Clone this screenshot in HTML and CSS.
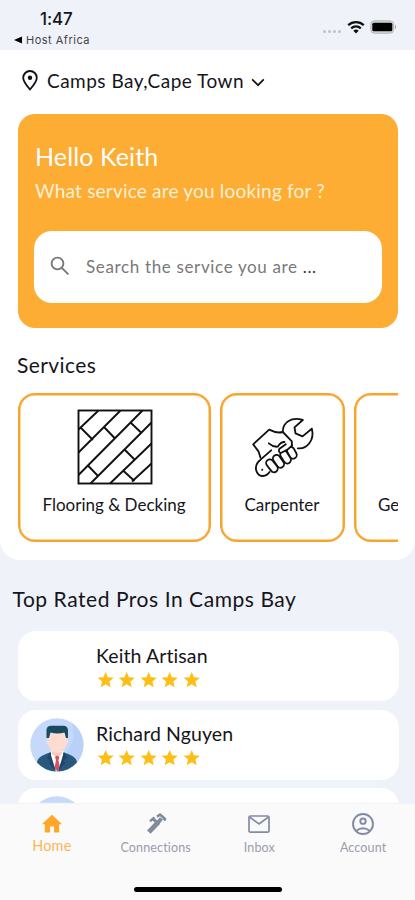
FILE: index.html
```html
<!DOCTYPE html>
<html lang="en">
<head>
<meta charset="utf-8">
<meta name="viewport" content="width=device-width, initial-scale=1">
<title>Home</title>
<link rel="stylesheet" href="styles.css">
</head>
<body>
<svg class="defs" width="0" height="0" aria-hidden="true">
  <symbol id="star" viewBox="0 0 24 24"><path d="M12 17.3 18.2 21l-1.6-7L22 9.200l-7.200-.6L12 2 9.200 8.600 2 9.200 7.500 14l-1.700 7z"/></symbol>
  <symbol id="avatar" viewBox="0 0 54 54">
    <circle cx="27" cy="27" r="26.700" fill="#c5dafa"/>
    <path d="M42 5a26.700 26.700 0 0 1 2 42L36 36 44 20z" fill="#b9d1f7"/>
    <path d="M7 44.500c1-5.500 5-7 13-10h14c8 3 12 4.500 13 10a26.700 26.700 0 0 1-40 0z" fill="#29587f"/>
    <path d="M21 33h12.500l-1 8-4 12.500h-3L21 41z" fill="#fff"/>
    <path d="M22 27h10v9l-5 4-5-4z" fill="#f8c9be"/>
    <path d="M18 15h19v6c1.500 0 1.500 5-.5 5.500C35 32 31 35 27.500 35S19.500 32 18.200 26.500C16 26 16 21 18 21z" fill="#fddcd2"/>
    <path d="M16.500 20V11.500Q17 8 21 7.800H33q5 0 5 5V20h-2l-1.500-5.500q-7 2-14 0L19 20z" fill="#194a5f"/>
    <path d="m25 39 2-1.500 2.500 1.500-1 3 1.500 8-2.500 3.500-3-3.500 1.500-8z" fill="#d9515e"/>
    <path d="m20 34-3 6 3 2-1 3 7 8.500zm14 0 3 6-3 2 1 3-7 8.500z" fill="#1d4669"/>
  </symbol>
</svg>
<div class="screen">
  <header class="status">
    <div class="status-left">
      <div class="time">1:47</div>
      <div class="back"><svg width="8" height="8" viewBox="0 0 8 8"><path d="M0 4 8 .5v7z"/></svg><span>Host Africa</span></div>
    </div>
    <div class="status-icons">
      <span class="dots"><i></i><i></i><i></i><i></i></span>
      <svg class="wifi" width="18" height="14" viewBox="0 0 18 14" fill="none" stroke="#111" stroke-width="2.300"><path d="M1.200 5.200a11.200 11.200 0 0 1 15.600 0M4.200 8.300a7 7 0 0 1 9.600 0"/><path d="M9 13.400 6.300 10.700a4 4 0 0 1 5.400 0z" fill="#111" stroke="none"/></svg>
      <svg width="27" height="14" viewBox="0 0 27 14"><rect x=".8" y=".8" width="22.800" height="12.400" rx="3.500" fill="#d5d6d8" stroke="#b5b6b8"/><rect x="2.300" y="2.700" width="20" height="8.600" rx="1.500" fill="#000"/><path d="M25 4.500q2 2.500 0 5z" fill="#999"/></svg>
    </div>
  </header>

  <main class="panel">
    <div class="location">
      <svg width="16" height="21" viewBox="0 0 16 21" fill="none" stroke="#111" stroke-width="1.800"><path d="M8 19.500C4 15 1.200 11.500 1.200 7.800a6.800 6.800 0 0 1 13.600 0C14.800 11.500 12 15 8 19.500z"/><circle cx="8" cy="7.800" r="2.200" fill="#111" stroke="none"/></svg>
      <span class="place">Camps Bay,Cape Town</span>
      <svg class="chevron" width="14" height="9" viewBox="0 0 14 9" fill="none" stroke="#111" stroke-width="1.700"><path d="m1.200 1.300 5.800 5.900 5.800-5.900"/></svg>
    </div>

    <section class="hero">
      <h1>Hello Keith</h1>
      <p>What service are you looking for ?</p>
      <div class="search">
        <svg width="20" height="20" viewBox="0 0 20 20" fill="none" stroke="#777" stroke-width="1.900"><circle cx="7.500" cy="7.500" r="5.900"/><path d="m11.800 11.800 6.600 6.600"/></svg>
        <span>Search the service you are <b>...</b></span>
      </div>
    </section>

    <h2 class="services-title">Services</h2>
    <div class="services">
      <article class="service flooring">
        <svg width="76" height="76" viewBox="0 0 76 76" fill="none" stroke="#111" stroke-width="1.900"><rect x="1.500" y="1.500" width="73" height="73"/><path d="M1.500 20.500 21.500 1.500M1.500 43.500 43.500 1.500M1.500 66 65.500 1.500M13.500 74.500l61-61M33 74.500l41.500-40M55 72.500 74.500 54.500M4 19l12 12M27 18l11.500 12M53.500 13.500l11 10.500M47 40l10.500 10.500M10.500 56l10 10.500M45.500 61l12 11"/></svg>
        <span>Flooring &amp; Decking</span>
      </article>
      <article class="service carpenter">
        <svg width="76" height="76" viewBox="-10.500 -9 228 228" fill="none" stroke="#111" stroke-width="5.500" stroke-linejoin="round" stroke-linecap="round">
          <path d="M103 60C102 30 130 14 163 24L138 46 141 64 162 73 190 50C199 85 175 112 148 109"/>
          <path d="M36 137 30 118 14 97 62 53Q85 65 103 60L130 88V101"/>
          <path d="M68 115 36 143Q19 156 23 175 28 193 43 192 56 191 63 180"/>
          <g fill="#fff">
            <rect x="119" y="104" width="22" height="37" rx="11" transform="rotate(-28 130 122)"/>
            <rect x="100" y="115" width="22" height="41" rx="11" transform="rotate(-32 111 135)"/>
            <rect x="79" y="127" width="22" height="42" rx="11" transform="rotate(-35 90 148)"/>
            <rect x="59" y="140" width="22" height="43" rx="11" transform="rotate(-38 70 161)"/>
            <path d="M112 97 93 110Q88 119 97 123L117 113 131 100"/>
          </g>
          <path d="M61 94Q75 106 88 104 96 90 108 90"/>
          <circle cx="41" cy="173" r="3" fill="#111" stroke="none"/>
        </svg>
        <span>Carpenter</span>
      </article>
      <article class="service general"><span>General</span></article>
    </div>
  </main>

  <section class="pros">
    <h2 class="pros-title">Top Rated Pros In Camps Bay</h2>
    <div class="pro">
      <div class="avatar"></div>
      <div class="info"><div class="name">Keith Artisan</div><div class="stars"><svg><use href="#star"/></svg><svg><use href="#star"/></svg><svg><use href="#star"/></svg><svg><use href="#star"/></svg><svg><use href="#star"/></svg></div></div>
    </div>
    <div class="pro">
      <svg class="avatar"><use href="#avatar"/></svg>
      <div class="info"><div class="name">Richard Nguyen</div><div class="stars"><svg><use href="#star"/></svg><svg><use href="#star"/></svg><svg><use href="#star"/></svg><svg><use href="#star"/></svg><svg><use href="#star"/></svg></div></div>
    </div>
    <div class="pro"><svg class="avatar"><use href="#avatar"/></svg></div>
  </section>

  <nav class="tabs">
    <div class="tab-row">
      <a class="tab active"><svg width="24" height="24" viewBox="0 0 24 24" fill="#fea728"><path d="M10 20.500v-6h4v6h5.200v-8.300h3L12 2.800 1.800 12.200h3v8.300z"/></svg><span>Home</span></a>
      <a class="tab"><svg width="24" height="24" viewBox="0 0 24 24" fill="none" stroke="#828a9d"><path d="M4.800 20.200 14.500 10" stroke-width="4.800"/><path d="m13.500 11 4-4.500" stroke-width="4"/><path d="m6 9.300 4.500-3.800" stroke-width="2.500"/><path d="m9 6.800 5 4.500" stroke-width="3"/><path d="m13 4.800 3-2.300 5 4.500-1 1.500" stroke-width="2.600" stroke-linejoin="round"/></svg><span>Connections</span></a>
      <a class="tab"><svg width="24" height="24" viewBox="0 0 24 24" fill="none" stroke="#828aa8" stroke-width="1.700"><rect x="2" y="4" width="20" height="16.200" rx="1.500"/><path d="m2.500 5 9.500 7 9.500-7"/></svg><span>Inbox</span></a>
      <a class="tab"><svg width="24" height="24" viewBox="0 0 24 24" fill="none" stroke="#828aa8" stroke-width="1.900"><circle cx="12" cy="12" r="10"/><circle cx="12" cy="9.200" r="2.700"/><path d="M5.300 18.700q6.700-5 13.400 0"/></svg><span>Account</span></a>
    </div>
    <div class="home-bar"></div>
  </nav>
</div>
</body>
</html>
```

FILE: styles.css
```css
* { box-sizing: border-box; }
body, h1, h2, p { margin: 0; font-weight: 400; }
body { font-family: Lato, sans-serif; color: #15151b; background: #eff2f8; white-space: nowrap; }
.defs { position: absolute; }
.screen { height: 900px; display: flex; flex-direction: column; overflow: hidden; }
svg { flex: none; display: block; }

.status { height: 50px; flex: none; display: flex; justify-content: space-between; padding: 9px 18px 0 14px; }
.status-left { font-family: Inter, sans-serif; }
.time { font-size: 17px; line-height: 20px; font-weight: 500; padding-left: 26px; letter-spacing: -.1px; }
.back { display: flex; align-items: center; gap: 4px; font-size: 11px; line-height: 16px; margin-top: 3px; letter-spacing: .5px; color: #444; }
.status-icons { display: flex; align-items: center; height: 18px; margin-top: 9px; }
.dots { display: flex; gap: 2px; margin: 8px 6px 0 0; }
.dots i { width: 3px; height: 3px; border-radius: 50%; background: #bfc2c8; }
.wifi { margin-right: 5px; }

.panel { height: 510px; flex: none; background: #fff; border-radius: 0 0 20px 20px; padding: 0 17px 0 18px; }
.location { height: 63.500px; display: flex; align-items: center; padding: 0 0 2px 4px; }
.place { font-size: 19px; width: 197px; margin: -1px 7px 0 9px; letter-spacing: .48px; }
.chevron { margin-top: 3px; }

.hero { height: 214px; background: #fdac34; border-radius: 17px; padding: 26px 16px 0; color: #fff; }
.hero h1 { font-size: 25px; line-height: 32px; letter-spacing: .12px; padding-left: 1px; }
.hero p { font-size: 19px; line-height: 26px; letter-spacing: .2px; margin-top: 6px; padding-left: 1px; color: #fff0d5; }
.search { height: 72px; margin-top: 27px; background: #fff; border-radius: 18px; display: flex; align-items: center; padding: 0 0 1px 16px; gap: 16px; font-size: 17px; letter-spacing: .65px; color: #797979; }
.search b { font-weight: 400; color: #333; }

.services-title { font-size: 21px; line-height: 28px; margin: 23px 0 0 -1px; letter-spacing: .4px; }
.services { height: 149px; margin-top: 14.500px; display: flex; gap: 9px; overflow: hidden; }
.service { flex: none; border: 2px solid #f8a42f; border-radius: 17px; display: flex; flex-direction: column; align-items: center; padding-top: 14px; box-shadow: inset 0 0 0 .5px #f8a42f; }
.service span { font-size: 17px; line-height: 22px; margin: 9px 1px 0 0; }
.flooring { width: 193px; }
.carpenter { width: 125px; }
.general { width: 125px; align-items: flex-start; padding-left: 22px; }
.general span { margin-top: 85px; }

.pros { flex: 1; padding: 24px 16.500px 0 17.500px; min-height: 0; overflow: hidden; }
.pros-title { font-size: 21px; line-height: 30px; margin: 0 0 17px -5px; letter-spacing: .55px; }
.pro { height: 70px; margin-bottom: 8.700px; background: #fff; border-radius: 18px; display: flex; align-items: center; padding-left: 12.500px; }
.avatar { width: 54px; height: 54px; }
.info { margin-left: 12px; }
.name { font-size: 19.500px; line-height: 25px; letter-spacing: .1px; }
.stars { display: flex; gap: 2px; margin-top: 2px; fill: #fdbf16; }
.stars svg { width: 19.400px; height: 20px; }

.tabs { height: 96px; flex: none; background: #fafafa; display: flex; flex-direction: column; align-items: center; justify-content: space-between; padding-bottom: 8px; box-shadow: 0 -1px 1px #f3f4f7; }
.tab-row { align-self: stretch; display: grid; grid-template-columns: repeat(4, 1fr); padding-top: 8px; }
.tab { display: flex; flex-direction: column; align-items: center; font-size: 12.500px; line-height: 18px; color: #9a9daa; gap: 3px; letter-spacing: .15px; }
.active { color: #fdb55a; font-size: 14.500px; gap: 1px; }
.home-bar { width: 148px; height: 5px; border-radius: 3px; background: #000; }
```
